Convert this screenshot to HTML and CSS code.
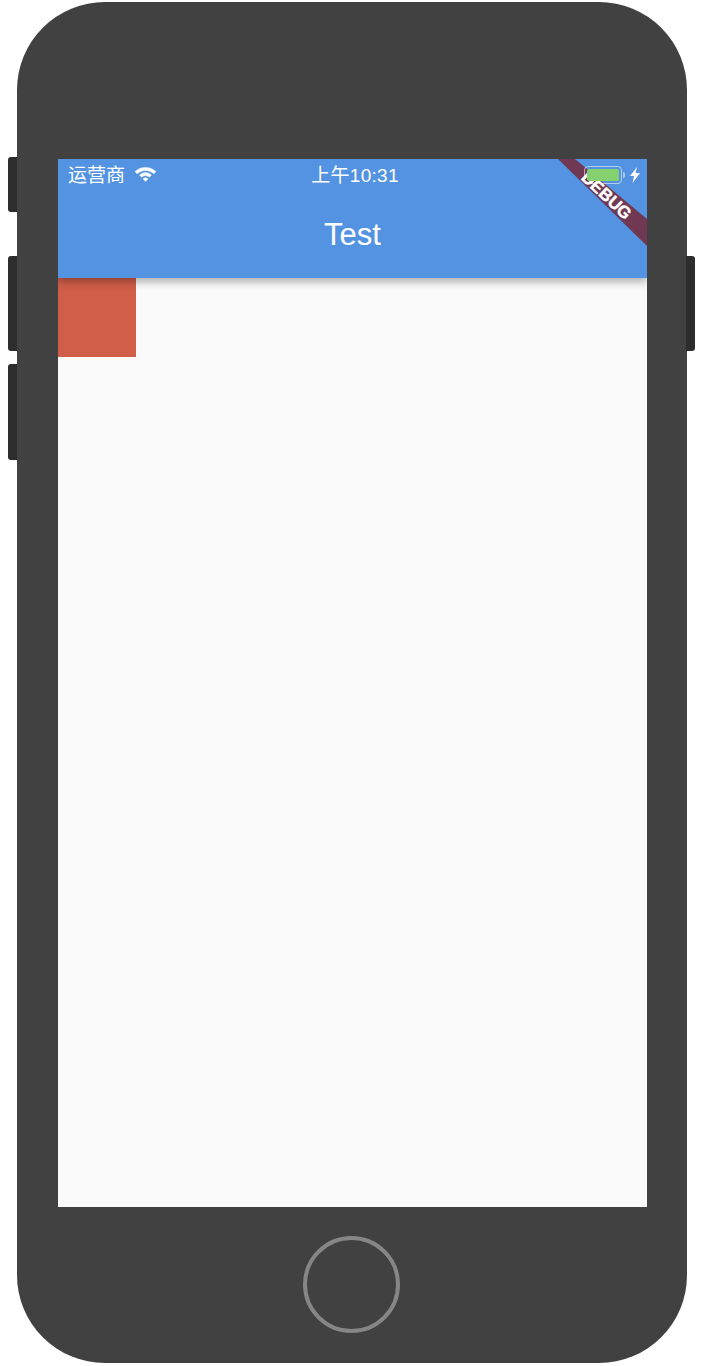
FILE: index.html
```html
<!DOCTYPE html>
<html>
<head>
  <title>Test</title>
  <link rel="stylesheet" href="styles.css">
</head>
<body>
  <div class="phone">
    <!-- hardware buttons stick out of the case -->
    <div class="side-btn btn-mute"></div>
    <div class="side-btn btn-vol-up"></div>
    <div class="side-btn btn-vol-down"></div>
    <div class="side-btn btn-power"></div>

    <div class="screen">
      <div class="app-bar">
        <div class="status-bar">
          <div class="status-left">
            <span class="carrier">运营商</span>
            <svg class="wifi" width="23" height="17" viewBox="0 0 22 16">
              <path d="M11 1.200C7 1.200 3.600 2.700 1 5.200l2 2.200C5.100 5.400 7.900 4.200 11 4.200s5.900 1.200 8 3.200l2-2.200C18.400 2.700 15 1.200 11 1.200z"/>
              <path d="M11 6.200c-2.200 0-4.200.9-5.700 2.300l2 2.100c1-.9 2.300-1.500 3.700-1.500s2.700.6 3.700 1.500l2-2.100C15.200 7.100 13.200 6.200 11 6.200z"/>
              <path d="M11 11.200c-1 0-1.800.4-2.400 1L11 14.800l2.400-2.600c-.6-.6-1.400-1-2.400-1z"/>
            </svg>
          </div>
          <span class="clock">上午10:31</span>
        </div>
        <div class="title-row">
          <span class="title">Test</span>
        </div>
      </div>
      <div class="content">
        <div class="red-box"></div>
      </div>

      <!-- debug ribbon, corner of the screen -->
      <div class="debug-corner">
        <svg class="ribbon" width="92" height="92" viewBox="0 0 92 92">
          <polygon points="3,0 20,0 92,60 92,87" fill="#703852"/>
        </svg>
        <span class="debug-text">DEBUG</span>
      </div>

      <div class="battery-wrap">
        <div class="battery">
          <div class="battery-fill"></div>
        </div>
        <div class="battery-tip"></div>
        <svg class="bolt" width="10" height="16" viewBox="0 0 10 16">
          <path d="M7 0L0 9h4L2.500 16 10 6H5.500z" fill="#fff"/>
        </svg>
      </div>
    </div>

    <div class="home-area">
      <div class="home-btn"></div>
    </div>
  </div>
</body>
</html>
```

FILE: styles.css
```css
html, body {
  margin: 0;
  padding: 0;
  background-color: #ffffff;
}

body {
  width: 704px;
  height: 1366px;
  overflow: hidden;
  font-family: "Liberation Sans", "Noto Sans CJK SC", sans-serif;
}

.phone {
  position: relative;
  box-sizing: border-box;
  width: 670px;
  height: 1361px;
  margin: 2px 0 0 17px;
  padding: 157px 40px 0 41px;
  background-color: #414141;
  border-radius: 88px;
}

/*side buttons*/
.side-btn {
  position: absolute;
  width: 9px;
  background-color: #2d2d2d;
}
.btn-mute {
  left: -9px;
  top: 155px;
  height: 55px;
  border-radius: 3px 0 0 3px;
}
.btn-vol-up {
  left: -9px;
  top: 254px;
  height: 95px;
  border-radius: 3px 0 0 3px;
}
.btn-vol-down {
  left: -9px;
  top: 362px;
  height: 96px;
  border-radius: 3px 0 0 3px;
}
.btn-power {
  right: -8px;
  top: 254px;
  height: 95px;
  border-radius: 0 3px 3px 0;
}

.screen {
  position: relative;
  width: 589px;
  height: 1048px;
  overflow: hidden;
  background-color: #fafafa;
}

.app-bar {
  position: relative;
  z-index: 1;
  height: 119px;
  background-color: #5393e2;
  box-shadow: 0 4px 8px rgba(0, 0, 0, 0.3);
  color: #ffffff;
}

.status-bar {
  position: relative;
  display: flex;
  align-items: center;
  justify-content: space-between;
  height: 34px;
  padding-left: 10px;
}

.status-left {
  display: flex;
  align-items: center;
  gap: 9px;
}

.carrier {
  font-size: 19px;
  line-height: 34px;
}

.wifi {
  margin-top: -3px;
  fill: #ffffff;
  stroke: #ffffff;
  stroke-width: 0.4;
}

.clock {
  position: absolute;
  left: 0;
  right: -5px;
  text-align: center;
  font-size: 19px;
  letter-spacing: 0.3px;
  line-height: 34px;
}

.title-row {
  display: flex;
  justify-content: center;
  align-items: center;
  height: 83px;
}

.title {
  font-size: 31px;
}

.red-box {
  width: 78px;
  height: 79px;
  background-color: #d15e49;
}

/*ribbon sits over the app bar*/
.debug-corner {
  position: absolute;
  z-index: 2;
  top: 0;
  right: 0;
  width: 92px;
  height: 92px;
}

.ribbon {
  display: block;
}

.debug-text {
  position: absolute;
  top: 28px;
  left: 16px;
  width: 70px;
  text-align: center;
  transform: rotate(43deg);
  font-size: 17px;
  font-weight: bold;
  line-height: 18px;
  color: #ffffff;
  -webkit-text-stroke: 0.4px #ffffff;
}

.battery-wrap {
  position: absolute;
  z-index: 3;
  top: 7px;
  left: 526px;
  display: flex;
  align-items: center;
}

.battery {
  box-sizing: border-box;
  width: 38px;
  height: 18px;
  padding: 2px;
  border: 1px solid rgba(255, 255, 255, 0.55);
  border-radius: 4px;
}

.battery-fill {
  height: 100%;
  background-color: #86d16f;
  border-radius: 2px;
}

.battery-tip {
  width: 2px;
  height: 6px;
  margin-left: 1px;
  background-color: rgba(255, 255, 255, 0.5);
  border-radius: 0 2px 2px 0;
}

.bolt {
  margin-left: 5px;
}

.home-area {
  display: flex;
  justify-content: center;
  padding: 29px 3px 0 0;
}

.home-btn {
  box-sizing: border-box;
  width: 97px;
  height: 97px;
  border: 4px solid #868686;
  border-radius: 50%;
}
```
